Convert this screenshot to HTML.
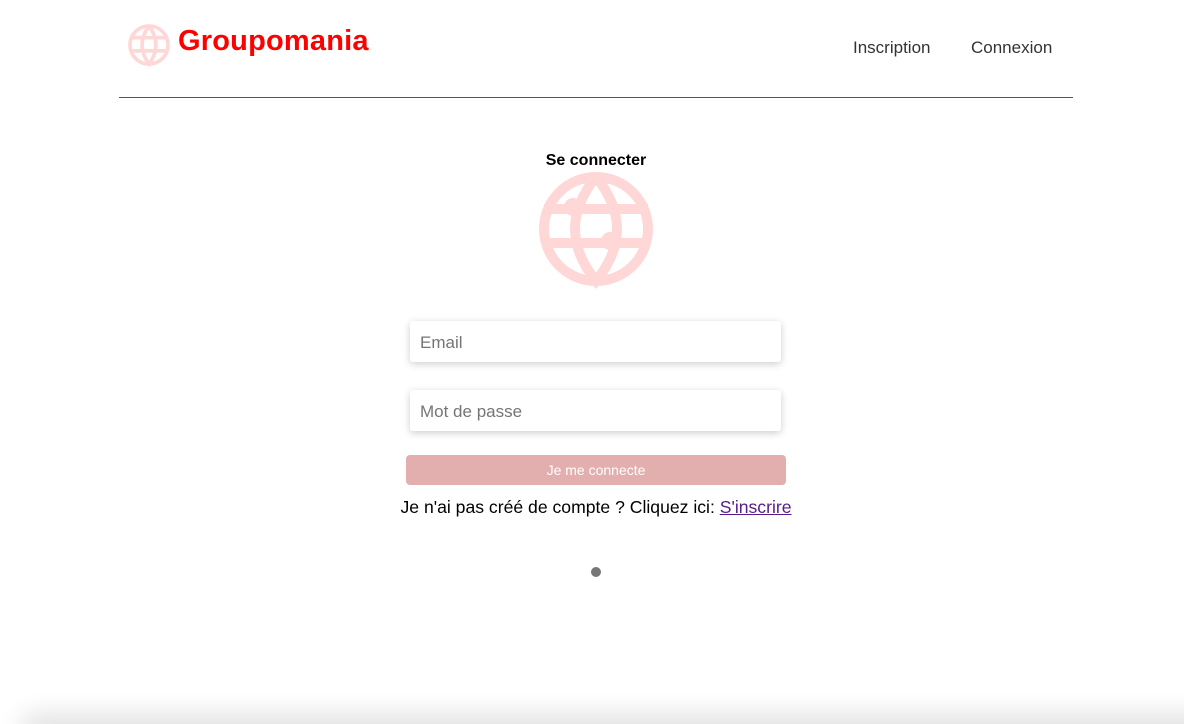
<!DOCTYPE html>
<html><head><meta charset="utf-8"><style>
html,body{margin:0;width:1184px;height:724px;overflow:hidden}
body{background:#fff;font-family:"Liberation Sans",Arial,sans-serif;position:relative}
.hdr{position:absolute;left:119px;top:0;width:954px;height:97px;border-bottom:1px solid #555}
.logo{position:absolute;left:8px;top:22px}
.brand{position:absolute;left:59px;top:25px;color:#f00;font-weight:bold;font-size:29px;letter-spacing:0.2px}
.nav{position:absolute;top:38px;font-size:17px;color:#333}
h1{position:absolute;top:152px;left:0;width:1192px;text-align:center;font-size:16px;margin:0;font-weight:bold}
.inp{position:absolute;left:410px;height:41px;background:#fff;border-radius:3px;box-shadow:0 2px 8px rgba(0,0,0,.2);padding-left:10px;font-size:17px;color:#757575;line-height:43px;width:361px}
.btn{position:absolute;left:406px;top:455px;width:380px;height:30px;background:#e3aeae;border-radius:4px;color:#fff;font-size:14px;text-align:center;line-height:30px}
.txt{position:absolute;top:497px;left:0;width:1192px;text-align:center;font-size:17.6px}
.txt a{color:#551a8b;text-decoration:underline}
.dot{position:absolute;left:591px;top:567px;width:10px;height:10px;border-radius:50%;background:#777}
.sh{position:absolute;left:20px;width:1250px;top:724px;height:30px;box-shadow:0 -10px 25px rgba(0,0,0,.12);border-radius:30px}
</style></head><body>
<div class="hdr">
<svg class="logo" width="44" height="46" viewBox="-60 -60 120 120"><g fill="none" stroke="#ffd7d7" stroke-width="10"><circle r="52"/><path d="M0 -52 Q-38 0 0 52 Q38 0 0 -52"/><line x1="-52" y1="-20" x2="52" y2="-20"/><line x1="-52" y1="16" x2="52" y2="16"/></g></svg>
<div class="brand">Groupomania</div>
<div class="nav" style="left:734px">Inscription</div>
<div class="nav" style="left:852px">Connexion</div>
</div>
<h1>Se connecter</h1>
<svg style="position:absolute;left:536px;top:169px" width="120" height="120" viewBox="-60 -60 120 120"><g fill="none" stroke="#ffd7d7" stroke-width="10"><circle r="52"/><path d="M0 -52 Q-42 0 0 52 Q42 0 0 -52"/><line x1="-52" y1="-20" x2="52" y2="-20"/><line x1="-52" y1="14" x2="52" y2="14"/></g><circle cx="-23" cy="-22" r="9" fill="#ffd7d7"/><circle cx="14" cy="12" r="9" fill="#ffd7d7"/></svg>
<div class="inp" style="top:321px">Email</div>
<div class="inp" style="top:390px">Mot de passe</div>
<div class="btn">Je me connecte</div>
<div class="txt">Je n'ai pas créé de compte ? Cliquez ici: <a>S'inscrire</a></div>
<div class="dot"></div>
<div class="sh"></div>
</body></html>
